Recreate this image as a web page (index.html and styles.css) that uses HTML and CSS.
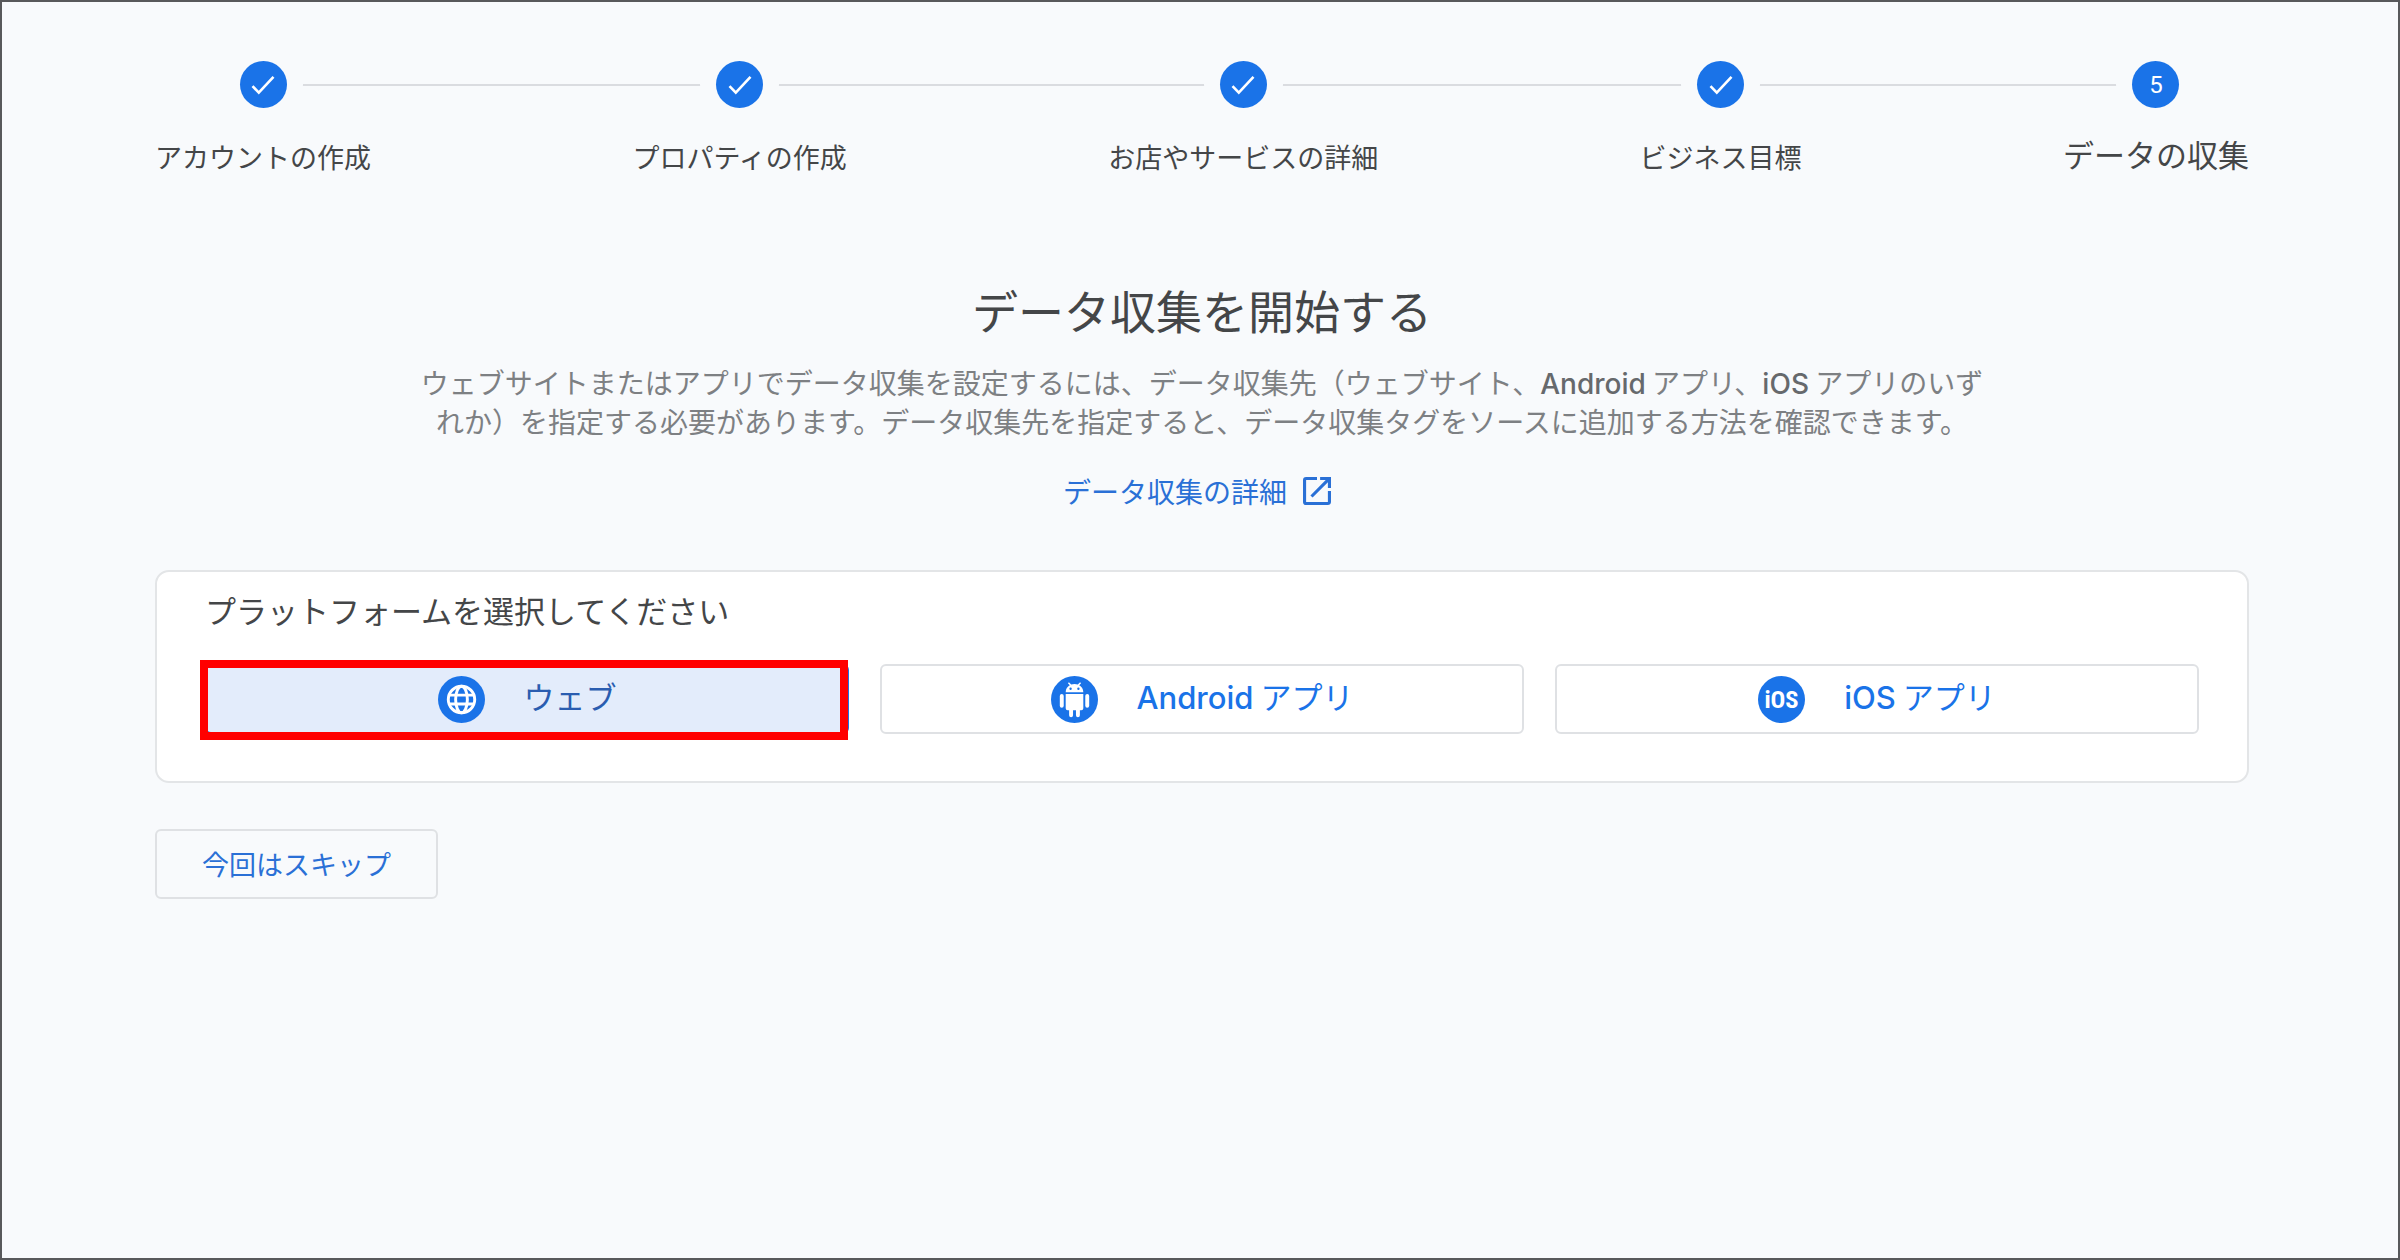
FILE: index.html
```
<!DOCTYPE html>
<html lang="ja">
<head>
<meta charset="utf-8">
<meta name="viewport" content="width=device-width, initial-scale=1">
<title>データ収集を開始する</title>
<link rel="stylesheet" href="styles.css">
</head>

<body>
<div class="wrapper">
	<ol class="steps">
		<li>
			<span class="dot"><svg viewBox="0 0 24 24"><path d="M6 12.6l3.6 3.8L18 7.4"/></svg></span>
			<span class="step-label">アカウントの作成</span>
		</li>
		<li>
			<span class="dot"><svg viewBox="0 0 24 24"><path d="M6 12.6l3.6 3.8L18 7.4"/></svg></span>
			<span class="step-label">プロパティの作成</span>
		</li>
		<li>
			<span class="dot"><svg viewBox="0 0 24 24"><path d="M6 12.6l3.6 3.8L18 7.4"/></svg></span>
			<span class="step-label">お店やサービスの詳細</span>
		</li>
		<li>
			<span class="dot"><svg viewBox="0 0 24 24"><path d="M6 12.6l3.6 3.8L18 7.4"/></svg></span>
			<span class="step-label">ビジネス目標</span>
		</li>
		<li class="current" aria-current="step">
			<span class="dot">5</span>
			<span class="step-label">データの収集</span>
		</li>
	</ol>

	<div class="intro">
		<h1>データ収集を開始する</h1>
		<p>ウェブサイトまたはアプリでデータ収集を設定するには、データ収集先（ウェブサイト、<span class="en">Android</span> アプリ、<span class="en">iOS</span> アプリのいず<br>れか）を指定する必要があります。データ収集先を指定すると、データ収集タグをソースに追加する方法を確認できます。</p>
		<a href="#" class="more">データ収集の詳細
			<svg viewBox="3 3 18 18"><path d="M19 19H5V5h7V3H5a2 2 0 0 0-2 2v14a2 2 0 0 0 2 2h14c1.1 0 2-.9 2-2v-7h-2v7zM14 3v2h3.59l-9.83 9.83 1.41 1.41L19 6.41V10h2V3h-7z"/></svg>
		</a>
	</div>

	<div class="card">
		<h2>プラットフォームを選択してください</h2>
		<div class="platforms">
			<button type="button" class="platform selected">
				<svg viewBox="0 0 48 48">
					<circle class="disc" cx="24" cy="24" r="24"/>
					<g class="globe">
						<circle cx="24" cy="24" r="13.5"/>
						<ellipse cx="24" cy="24" rx="6" ry="13.5"/>
						<path d="M11.500 19.500h25M11.500 28.500h25"/>
					</g>
				</svg>
				<span>ウェブ</span>
			</button>
			<button type="button" class="platform">
				<svg viewBox="0 0 48 48">
					<circle class="disc" cx="24" cy="24" r="24"/>
					<g class="robot">
						<path d="M15 16.5c0-3.2 1.7-5.6 4.2-7l-1.9-2.1 1-.9 2.3 2.3a11 11 0 0 1 6.8 0l2.3-2.3 1 .9-1.9 2.1c2.5 1.4 4.2 3.8 4.2 7z"/>
						<path d="M15 18.5h18V33a2 2 0 0 1-2 2h-1.500v5a2 2 0 0 1-4 0v-5h-3v5a2 2 0 0 1-4 0v-5H17a2 2 0 0 1-2-2z"/>
						<rect x="9" y="18.500" width="4" height="14" rx="2"/>
						<rect x="35" y="18.500" width="4" height="14" rx="2"/>
						<circle class="disc" cx="20" cy="13" r="1.200"/>
						<circle class="disc" cx="28" cy="13" r="1.200"/>
					</g>
				</svg>
				<span><span class="en">Android</span> アプリ</span>
			</button>
			<button type="button" class="platform">
				<svg viewBox="0 0 48 48">
					<circle class="disc" cx="24" cy="24" r="24"/>
					<text class="ios" x="24" y="33" text-anchor="middle">iOS</text>
				</svg>
				<span><span class="en">iOS</span> アプリ</span>
			</button>
		</div>
	</div>

	<button type="button" class="skip">今回はスキップ</button>
</div>
</body>
</html>
```
FILE: styles.css
```
*{
	box-sizing: border-box;
}
body{
	margin: 0;
	font-family: "Noto Sans CJK JP", sans-serif;
	font-size: 28px;
	color: #444648;
}
.wrapper{
	min-height: 100vh;
	padding: 59px 149px 59px 153px;
	border: 2px solid #58595b;
	background: #f8fafc;
}
.en{
	font-family: Inter, sans-serif;
	font-weight: 500;
	line-height: 1;
}

/* stepper: one line behind, each dot cuts a gap in it */
.steps{
	display: flex;
	justify-content: space-between;
	margin: 0;
	padding: 0;
	list-style: none;
	background: linear-gradient(#dadce0, #dadce0) no-repeat 110px 23px / calc(100% - 205px) 2px;
}
.steps li{
	display: flex;
	flex-direction: column;
	align-items: center;
	gap: 29px;
}
.dot{
	display: flex;
	align-items: center;
	justify-content: center;
	width: 47px;
	height: 47px;
	border-radius: 50%;
	background: #1a73e8;
	box-shadow: 0 0 0 16px #f8fafc;
	color: #fff;
	font-family: Roboto, sans-serif;
	font-size: 24px;
}
.dot svg{
	width: 42px;
	height: 42px;
	fill: none;
	stroke: #fff;
	stroke-width: 1.5;
}
.step-label{
	font-size: 27px;
	line-height: 40px;
}
.current .step-label{
	font-size: 31px;
	line-height: 34px;
}

.intro{
	display: flex;
	flex-direction: column;
	align-items: center;
	text-align: center;
}
h1{
	margin: 96px 0 18px;
	font-size: 46px;
	line-height: 72px;
	font-weight: 400;
}
.intro p{
	margin: 0;
	font-size: 28px;
	line-height: 39px;
	color: #7d8083;
}
.intro .en{
	color: #66696c;
}
.more{
	display: flex;
	align-items: center;
	gap: 16px;
	margin-top: 30px;
	font-size: 28px;
	line-height: 40px;
	color: #2a70d6;
	text-decoration: none;
}
.more svg{
	width: 28px;
	height: 28px;
	margin-right: 10px;
	fill: #2a70d6;
}

.card{
	margin-top: 59px;
	padding: 15px 48px 47px;
	border: 2px solid #e3e5e7;
	border-radius: 14px;
	background: #fff;
}
h2{
	margin: 0 0 31px;
	font-size: 31px;
	line-height: 46px;
	font-weight: 400;
}
.platforms{
	display: grid;
	grid-template-columns: repeat(3, 1fr);
	gap: 31px;
}
button{
	font-family: inherit;
	border: 2px solid #dfe1e4;
	border-radius: 6px;
	cursor: pointer;
}
.platform{
	position: relative;
	display: flex;
	align-items: center;
	justify-content: center;
	gap: 39px;
	height: 70px;
	background: #fff;
	font-size: 31px;
	line-height: 40px;
	color: #1a73e8;
}
.platform > span{
	padding-bottom: 6px;
}
.platform svg{
	width: 47px;
	height: 47px;
}
.selected{
	border-color: #1a73e8;
	background: #e3ecfb;
	color: #2a5db0;
}
/* red highlight frame over the button */
.selected::after{
	content: "";
	position: absolute;
	top: -6px;
	right: -1px;
	bottom: -8px;
	left: -7px;
	border: 8px solid #f00;
}
.disc{
	fill: #1a73e8;
}
.globe{
	fill: none;
	stroke: #fff;
	stroke-width: 3;
}
.robot{
	fill: #fff;
}
.ios{
	font-family: "Liberation Sans Narrow", "Roboto Condensed", Roboto, sans-serif;
	font-size: 25px;
	font-weight: 700;
	fill: #fff;
}
.skip{
	height: 70px;
	margin-top: 46px;
	padding: 0 45px;
	background: transparent;
	font-size: 27px;
	line-height: 40px;
	color: #2a70d6;
}
```
